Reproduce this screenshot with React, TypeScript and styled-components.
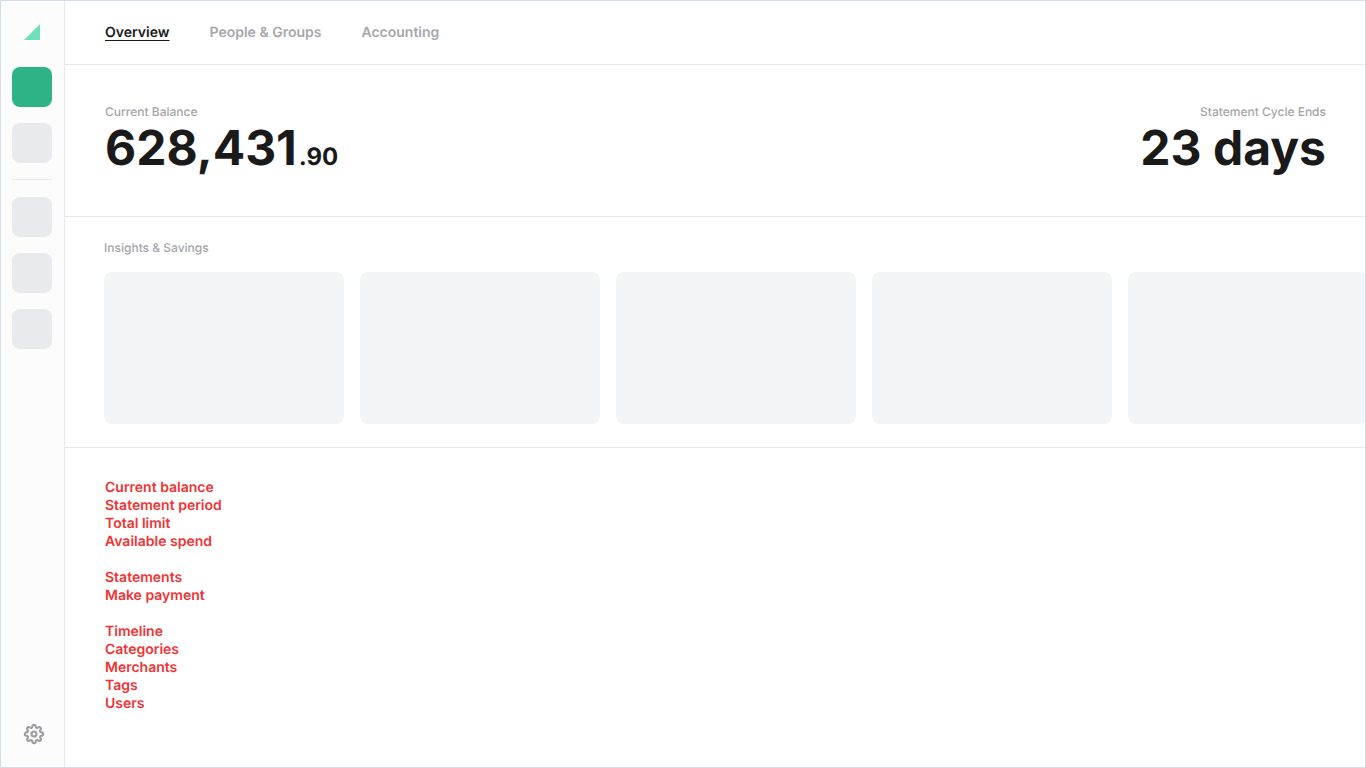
import React from 'react';
import styled, { createGlobalStyle } from 'styled-components';
import { FiSettings } from 'react-icons/fi';

const GlobalStyle = createGlobalStyle`
  *, *::before, *::after { box-sizing: border-box; }
  body {
    margin: 0;
    font-family: Inter, "Liberation Sans", sans-serif;
    font-size: 14px;
    line-height: 18px;
    color: #1a1a1a;
    background: #fff;
    text-rendering: geometricPrecision;
  }
`;

const Frame = styled.div`
  display: flex;
  min-height: 100vh;
  border: 1px solid #d3dcec;
  overflow: hidden;
`;

const Sidebar = styled.aside`
  flex: none;
  display: flex;
  flex-direction: column;
  align-items: center;
  width: 64px;
  padding: 22px 12px 23px 11px;
  background: #fcfcfc;
  border-right: 1px solid #e4e6ec;
`;

const Logo = styled.a`
  display: flex;
  margin-bottom: 26px;
`;

const Spaces = styled.nav`
  display: flex;
  flex-direction: column;
  gap: 16px;
`;

const SpaceButton = styled.button<{ $active?: boolean }>`
  width: 40px;
  height: 40px;
  padding: 0;
  border: 0;
  border-radius: 8px;
  background: ${({ $active }) => ($active ? '#2eb386' : '#e8eaee')};
  cursor: pointer;
`;

const Divider = styled.hr`
  width: 40px;
  height: 2px;
  margin: 0;
  border: 0;
  border-top: 1px solid #e8e9ec;
`;

const SettingsButton = styled.button`
  display: flex;
  margin-top: auto;
  margin-left: 4px;
  padding: 0;
  border: 0;
  background: none;
  color: #9b9da1;
  cursor: pointer;

  svg {
    stroke-width: 2.5;
    overflow: visible;
  }
`;

const Main = styled.main`
  flex: 1;
  min-width: 0;
`;

const Tabs = styled.nav`
  display: flex;
  align-items: center;
  gap: 40px;
  height: 64px;
  padding: 1px 40px 0;
  border-bottom: 1px solid #e8e8ea;
`;

const Tab = styled.a<{ $active?: boolean }>`
  font-weight: 600;
  color: ${({ $active }) => ($active ? '#1a1a1a' : '#a6a8ab')};
  text-decoration: ${({ $active }) => ($active ? 'underline' : 'none')};
  text-decoration-thickness: 1px;
  text-underline-offset: 3px;
`;

const Summary = styled.section`
  display: flex;
  justify-content: space-between;
  padding: 38px 39px 41px 40px;
  border-bottom: 1px solid #e8e8ea;
`;

const Stat = styled.div<{ $end?: boolean }>`
  text-align: ${({ $end }) => ($end ? 'right' : 'left')};
`;

const Label = styled.h2`
  margin: 0;
  font-size: 12px;
  font-weight: 500;
  line-height: 18px;
  color: #a3a5a8;
`;

const Figure = styled.p`
  margin: 0;
  font-size: 48px;
  font-weight: 700;
  line-height: 54px;
`;

const Cents = styled.span`
  margin-left: 2px;
  font-size: 24px;
  line-height: 24px;
`;

const Insights = styled.section`
  padding: 22px 0 23px 39px;
  border-bottom: 1px solid #e8e8ea;
`;

const Cards = styled.div`
  display: flex;
  gap: 16px;
  margin-top: 15px;
  overflow: hidden;
`;

const Card = styled.article`
  flex: none;
  width: 240px;
  height: 152px;
  border-radius: 8px;
  background: #f3f4f6;
`;

const Notes = styled.section`
  display: flex;
  flex-direction: column;
  gap: 18px;
  padding: 31px 40px;
`;

const NoteList = styled.ul`
  margin: 0;
  padding: 0;
  list-style: none;
  font-weight: 600;
  color: #ef3434;
`;

const tabs = ['Overview', 'People & Groups', 'Accounting'];

const notes = [
  ['Current balance', 'Statement period', 'Total limit', 'Available spend'],
  ['Statements', 'Make payment'],
  ['Timeline', 'Categories', 'Merchants', 'Tags', 'Users'],
];

export default function App() {
  return (
    <>
      <GlobalStyle />
      <Frame>
        <Sidebar>
          <Logo href="#" aria-label="Home">
            <svg width="18" height="18" viewBox="0 0 18 18" aria-hidden="true">
              <path d="M17 1v16H1z" fill="#6ce0bd" />
            </svg>
          </Logo>
          <Spaces aria-label="Spaces">
            <SpaceButton $active aria-label="Space 1" />
            <SpaceButton aria-label="Space 2" />
            <Divider />
            <SpaceButton aria-label="Space 3" />
            <SpaceButton aria-label="Space 4" />
            <SpaceButton aria-label="Space 5" />
          </Spaces>
          <SettingsButton aria-label="Settings">
            <FiSettings size={20} />
          </SettingsButton>
        </Sidebar>
        <Main>
          <Tabs aria-label="Sections">
            {tabs.map((tab, i) => (
              <Tab key={tab} href="#" $active={i === 0}>{tab}</Tab>
            ))}
          </Tabs>
          <Summary>
            <Stat>
              <Label>Current Balance</Label>
              <Figure>628,431<Cents>.90</Cents></Figure>
            </Stat>
            <Stat $end>
              <Label>Statement Cycle Ends</Label>
              <Figure>23 days</Figure>
            </Stat>
          </Summary>
          <Insights>
            <Label>Insights &amp; Savings</Label>
            <Cards>
              {[1, 2, 3, 4, 5].map((id) => <Card key={id} />)}
            </Cards>
          </Insights>
          <Notes>
            {notes.map((group) => (
              <NoteList key={group[0]}>
                {group.map((note) => <li key={note}>{note}</li>)}
              </NoteList>
            ))}
          </Notes>
        </Main>
      </Frame>
    </>
  );
}
